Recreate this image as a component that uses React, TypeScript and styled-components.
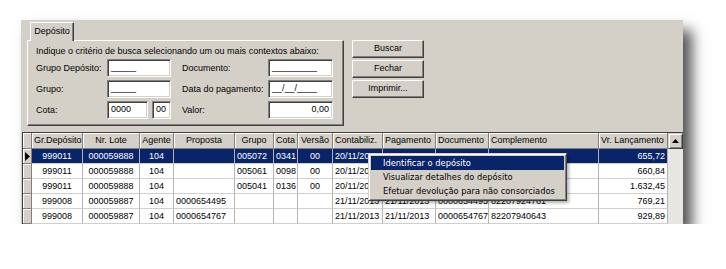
import { memo } from "react";
import styled, { createGlobalStyle } from "styled-components";

const GlobalStyle = createGlobalStyle`
  body {
    margin: 0;
    background: #ffffff;
    font-family: "Liberation Sans", Arial, sans-serif;
    font-size: 9px;
    color: #000;
  }
`;

type Align = "left" | "center" | "right";

interface Column {
  title: string;
  width: number;
  align: Align;
  headAlign: Align;
}

const columns: Column[] = [
  { title: "Gr.Depósito", width: 51, align: "center", headAlign: "left" },
  { title: "Nr. Lote", width: 57, align: "center", headAlign: "center" },
  { title: "Agente", width: 34, align: "center", headAlign: "center" },
  { title: "Proposta", width: 61, align: "left", headAlign: "center" },
  { title: "Grupo", width: 39, align: "left", headAlign: "center" },
  { title: "Cota", width: 24, align: "left", headAlign: "left" },
  { title: "Versão", width: 35, align: "center", headAlign: "center" },
  { title: "Contabiliz.", width: 50, align: "left", headAlign: "left" },
  { title: "Pagamento", width: 53, align: "left", headAlign: "left" },
  { title: "Documento", width: 53, align: "left", headAlign: "left" },
  { title: "Complemento", width: 110, align: "left", headAlign: "left" },
  { title: "Vr. Lançamento", width: 69, align: "right", headAlign: "left" },
];

// cells covered by the popup menu are left empty
const rows: string[][] = [
  ["999011", "000059888", "104", "", "005072", "0341", "00", "20/11/2013", "", "", "", "655,72"],
  ["999011", "000059888", "104", "", "005061", "0098", "00", "20/11/2013", "", "", "", "660,84"],
  ["999011", "000059888", "104", "", "005041", "0136", "00", "20/11/2013", "", "", "", "1.632,45"],
  ["999008", "000059887", "104", "0000654495", "", "", "", "21/11/2013", "21/11/2013", "0000654495", "82207924761", "769,21"],
  ["999008", "000059887", "104", "0000654767", "", "", "", "21/11/2013", "21/11/2013", "0000654767", "82207940643", "929,89"],
];

const gridTemplate = `9px ${columns.map((c) => `${c.width}px`).join(" ")}`;

const menuItems = [
  "Identificar o depósito",
  "Visualizar detalhes do depósito",
  "Efetuar devolução para não consorciados",
];

const App = () => {
  return (
    <>
      <GlobalStyle />
      <Page>
        <Window>
          <TopArea>
            <TabControl>
              <TabStrip>
                <Tab>Depósito</Tab>
              </TabStrip>
              <TabPage>
                <Intro>Indique o critério de busca selecionando um ou mais contextos abaixo:</Intro>
                <FormGrid>
                  <Label>Grupo Depósito:</Label>
                  <Field>_____</Field>
                  <Label $indent>Documento:</Label>
                  <Field>_________</Field>

                  <Label>Grupo:</Label>
                  <Field>_____</Field>
                  <Label $indent>Data do pagamento:</Label>
                  <Field>__/__/____</Field>

                  <Label>Cota:</Label>
                  <Pair>
                    <Field $width={41}>0000</Field>
                    <Field $width={19}>00</Field>
                  </Pair>
                  <Label $indent>Valor:</Label>
                  <Field $align="right">0,00</Field>
                </FormGrid>
              </TabPage>
            </TabControl>
            <ButtonColumn>
              <Button>Buscar</Button>
              <Button>Fechar</Button>
              <Button>Imprimir...</Button>
            </ButtonColumn>
          </TopArea>

          <TableFrame>
            <TableBody>
              <HeaderRow>
                <HeadCell $align="left" />
                {columns.map((c) => (
                  <HeadCell key={c.title} $align={c.headAlign}>
                    {c.title}
                  </HeadCell>
                ))}
              </HeaderRow>
              {rows.map((row, i) => (
                <DataRow key={i}>
                  <Indicator>
                    {i === 0 && (
                      <svg width="5" height="9" viewBox="0 0 5 9">
                        <path d="M0 0 L5 4.5 L0 9 Z" fill="#000" />
                      </svg>
                    )}
                  </Indicator>
                  {row.map((v, j) => (
                    <Cell key={j} $align={columns[j].align} $selected={i === 0}>
                      {v}
                    </Cell>
                  ))}
                </DataRow>
              ))}
            </TableBody>
            <ScrollBar>
              <ScrollButton>
                <svg width="7" height="4" viewBox="0 0 7 4">
                  <path d="M3.5 0 L7 4 L0 4 Z" fill="#000" />
                </svg>
              </ScrollButton>
            </ScrollBar>
          </TableFrame>

          <ContextMenu>
            {menuItems.map((m, i) => (
              <MenuItem key={m} $active={i === 0}>
                {m}
              </MenuItem>
            ))}
          </ContextMenu>
        </Window>
      </Page>
    </>
  );
};

export default memo(App);

const Page = styled.div`
  padding: 20px 0 0 21px;
`;

const Window = styled.div`
  position: relative;
  width: 662px;
  height: 204px;
  background: #d4d0c8;
  display: flex;
  flex-direction: column;
  box-shadow: 9px 10px 13px rgba(0, 0, 0, 0.68);
`;

const TopArea = styled.div`
  display: flex;
  height: 112px;
  box-sizing: border-box;
  padding: 2px 0 0 6px;
`;

const TabControl = styled.div`
  width: 317px;
  display: flex;
  flex-direction: column;
`;

const TabStrip = styled.div`
  height: 18px;
  display: flex;
  padding-left: 3px;
`;

const Tab = styled.div`
  position: relative;
  z-index: 1;
  width: 44px;
  height: 19px;
  box-sizing: border-box;
  background: #d4d0c8;
  border-top: 1px solid #ffffff;
  border-left: 1px solid #ffffff;
  border-right: 1px solid #404040;
  box-shadow: inset -1px 0 #808080;
  text-align: center;
  line-height: 16px;
`;

const TabPage = styled.div`
  height: 86px;
  box-sizing: border-box;
  border: 1px solid;
  border-color: #ffffff #404040 #404040 #ffffff;
  box-shadow: inset -1px -1px #808080;
  padding: 3px 0 0 8px;
`;

const Intro = styled.div`
  height: 15px;
  line-height: 15px;
  white-space: nowrap;
`;

const FormGrid = styled.div`
  display: grid;
  grid-template-columns: 71px 64px 97px 65px;
  grid-auto-rows: 18px;
  row-gap: 3px;
  align-items: center;
`;

const Label = styled.div<{ $indent?: boolean }>`
  padding-left: ${(p) => (p.$indent ? "11px" : "0")};
  white-space: nowrap;
`;

const Pair = styled.div`
  display: flex;
  gap: 4px;
`;

const Field = styled.div<{ $width?: number; $align?: Align }>`
  width: ${(p) => (p.$width ? `${p.$width}px` : "100%")};
  height: 18px;
  box-sizing: border-box;
  background: #ffffff;
  border: 1px solid;
  border-color: #808080 #ffffff #ffffff #808080;
  box-shadow: inset 1px 1px #404040, inset -1px -1px #d4d0c8;
  padding: 0 3px;
  line-height: 15px;
  text-align: ${(p) => p.$align || "left"};
  white-space: nowrap;
  overflow: hidden;
`;

const ButtonColumn = styled.div`
  display: flex;
  flex-direction: column;
  gap: 2px;
  margin: 18px 0 0 8px;
`;

const Button = styled.div`
  width: 72px;
  height: 18px;
  box-sizing: border-box;
  background: #d4d0c8;
  border: 1px solid;
  border-color: #ffffff #404040 #404040 #ffffff;
  box-shadow: inset -1px -1px #808080;
  text-align: center;
  line-height: 15px;
`;

const TableFrame = styled.div`
  display: flex;
  margin-left: 1px;
  border-top: 1px solid #404040;
  border-left: 1px solid #404040;
`;

const TableBody = styled.div`
  display: flex;
  flex-direction: column;
`;

const HeaderRow = styled.div`
  display: grid;
  grid-template-columns: ${gridTemplate};
  height: 16px;
`;

const HeadCell = styled.div<{ $align: Align }>`
  box-sizing: border-box;
  background: #d4d0c8;
  border-right: 1px solid #808080;
  border-bottom: 1px solid #808080;
  box-shadow: inset 1px 1px #ffffff;
  padding: 0 2px;
  line-height: 15px;
  text-align: ${(p) => p.$align};
  white-space: nowrap;
  overflow: hidden;
`;

const DataRow = styled.div`
  display: grid;
  grid-template-columns: ${gridTemplate};
  height: 15px;
`;

const Indicator = styled.div`
  box-sizing: border-box;
  background: #d4d0c8;
  border-right: 1px solid #808080;
  border-bottom: 1px solid #808080;
  box-shadow: inset 1px 1px #ffffff;
  display: flex;
  align-items: center;
  padding-left: 2px;
`;

const Cell = styled.div<{ $align: Align; $selected?: boolean }>`
  box-sizing: border-box;
  background: ${(p) => (p.$selected ? "#0a246a" : "#ffffff")};
  color: ${(p) => (p.$selected ? "#ffffff" : "#000000")};
  border-right: 1px solid #b4b4b4;
  border-bottom: 1px solid #d0d0d0;
  padding: 0 2px;
  line-height: 14px;
  text-align: ${(p) => p.$align};
  white-space: nowrap;
  overflow: hidden;
`;

const ScrollBar = styled.div`
  width: 15px;
  background: #e8e6e1;
  display: flex;
  flex-direction: column;
`;

const ScrollButton = styled.div`
  height: 16px;
  box-sizing: border-box;
  background: #d4d0c8;
  border: 1px solid;
  border-color: #d4d0c8 #404040 #404040 #d4d0c8;
  box-shadow: inset 1px 1px #ffffff, inset -1px -1px #808080;
  display: flex;
  align-items: center;
  justify-content: center;
`;

const ContextMenu = styled.div`
  position: absolute;
  left: 347px;
  top: 133px;
  width: 199px;
  box-sizing: border-box;
  background: #d4d0c8;
  border: 1px solid;
  border-color: #d4d0c8 #404040 #404040 #d4d0c8;
  box-shadow: inset 1px 1px #ffffff, inset -1px -1px #808080, 2px 2px 3px rgba(0, 0, 0, 0.3);
  padding: 2px;
  font-family: "DejaVu Sans", Tahoma, sans-serif;
  font-size: 8.3px;
`;

const MenuItem = styled.div<{ $active?: boolean }>`
  height: 14px;
  line-height: 14px;
  padding-left: 12px;
  white-space: nowrap;
  background: ${(p) => (p.$active ? "#0a246a" : "transparent")};
  color: ${(p) => (p.$active ? "#ffffff" : "#000000")};
`;
